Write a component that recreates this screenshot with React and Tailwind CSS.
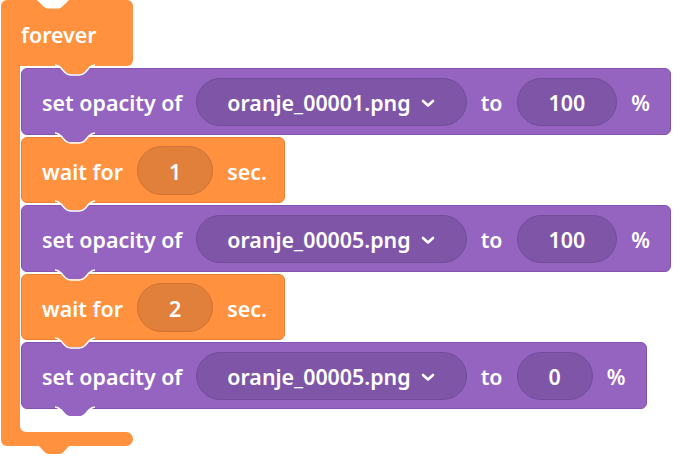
import React from "react";

// tab that hangs below a block and drops into the notch of the next one
function Tab({ fill, left, outline = true }) {
  return (
    <svg
      className="absolute top-full -mt-[2px] z-10 pointer-events-none"
      style={{ left }}
      width="44"
      height="12"
      viewBox="0 0 44 12"
    >
      <path
        d="M0 0 C3 0 4 1 6 3 L10 7.5 C12 9.5 13 10 16 10 H24 C27 10 28 9.5 30 7.5 L34 3 C36 1 37 0 40 0 Z"
        fill={fill}
      />
      {outline && (
        <path
          d="M0 1 C3 1 4 2 6 4 L10 8.5 C12 10.5 13 11 16 11 H24 C27 11 28 10.5 30 8.5 L34 4 C36 2 37 1 40 1"
          fill="none"
          stroke="white"
          strokeWidth="1.6"
        />
      )}
    </svg>
  );
}

function Chevron() {
  return (
    <svg width="14" height="9" viewBox="0 0 14 9" className="shrink-0">
      <path d="M2 2 L7 6.5 L12 2" fill="none" stroke="white" strokeWidth="2.6" strokeLinecap="round" strokeLinejoin="round" />
    </svg>
  );
}

function OpacityBlock({ file, value }) {
  return (
    <div className="relative h-[67px] flex items-center gap-[14px] pl-[20px] pr-[20px] pt-[3px] bg-[#9564c0] border border-[#8553b3] rounded-[6px] w-fit">
      <span>set opacity of</span>
      <div className="h-[48px] -mt-[3px] flex items-center gap-[10px] pl-[30px] pr-[31px] pt-[3px] rounded-full bg-[#7f56a7] border border-[#744c9c]">
        <span>{file}</span>
        <Chevron />
      </div>
      <span>to</span>
      <div className="h-[48px] -mt-[3px] pt-[3px] flex items-center justify-center px-[31px] rounded-full bg-[#7f56a7] border border-[#744c9c]">
        {value}
      </div>
      <span>%</span>
      <Tab fill="#9564c0" left={33} />
    </div>
  );
}

function WaitBlock({ secs }) {
  return (
    <div className="relative h-[66px] w-[264px] flex items-center gap-[14px] pl-[20px] pt-[3px] bg-[#ff913f] border border-[#ea8030] rounded-[6px]">
      <span>wait for</span>
      <div className="h-[49px] -mt-[3px] pt-[3px] flex items-center justify-center px-[31px] rounded-full bg-[#e0803b] border border-[#cf7232]">
        {secs}
      </div>
      <span>sec.</span>
      <Tab fill="#ff913f" left={33} />
    </div>
  );
}

export default function App() {
  return (
    <div className="w-[690px] h-[469px] bg-white pl-[1px] text-white text-[21.4px] font-semibold font-['Noto_Sans',sans-serif] leading-none overflow-hidden">
      {/* forever: top arm */}
      <div className="relative w-[132px] h-[66px] flex items-center pl-[20px] pt-[3px] bg-[#ff913f] rounded-t-[6px] rounded-br-[6px]">
        <span>forever</span>
        <svg className="absolute -top-[1px] left-[32px]" width="44" height="11" viewBox="0 0 44 11">
          <path
            d="M0 0 C3 0 4 1 6 3 L10 7 C12 9 13 9.5 16 9.5 H24 C27 9.5 28 9 30 7 L34 3 C36 1 37 0 40 0 Z"
            fill="white"
          />
        </svg>
        <Tab fill="#ff913f" left={54} />
      </div>

      <div className="flex">
        <div className="w-[19px] bg-[#ff913f]" />
        <div className="flex flex-col gap-[2px] pt-[2px] pl-[1px]">
          <OpacityBlock file="oranje_00001.png" value="100" />
          <WaitBlock secs="1" />
          <OpacityBlock file="oranje_00005.png" value="100" />
          <WaitBlock secs="2" />
          <OpacityBlock file="oranje_00005.png" value="0" />
          <div className="relative h-[21px]">
            <div className="absolute bottom-0 -left-[1px] w-[6px] h-[6px] bg-[#ff913f]">
              <div className="w-full h-full bg-white rounded-bl-[6px]" />
            </div>
          </div>
        </div>
      </div>

      {/* forever: bottom arm */}
      <div className="relative w-[132px] h-[14px] bg-[#ff913f] rounded-r-[7px] rounded-bl-[6px]">
        <Tab fill="#ff913f" left={33} outline={false} />
      </div>
    </div>
  );
}
